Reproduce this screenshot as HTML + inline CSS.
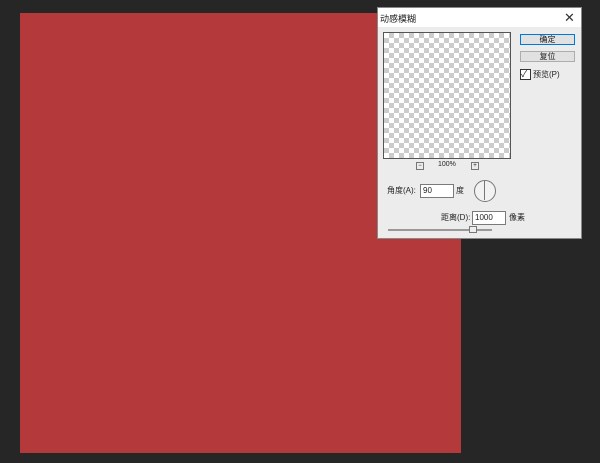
<!DOCTYPE html><html><head><meta charset="utf-8"><style>
body{margin:0;width:600px;height:463px;background:#262626;position:relative;overflow:hidden;font-family:"Liberation Sans","Noto Sans CJK SC",sans-serif;font-size:8px;color:#222}
.a{position:absolute}
.red{left:20px;top:13px;width:441px;height:440px;background:#b3393b}
.dlg{left:377px;top:7px;width:205px;height:232px;background:#ececec;border:1px solid #888;box-sizing:border-box}
.tb{left:0;top:0;width:203px;height:19px;background:#fff}
.chk{left:5px;top:24px;width:126px;height:125px;border:1px solid #555;background-color:#fff;background-image:linear-gradient(45deg,#ccc 25%,transparent 25%,transparent 75%,#ccc 75%),linear-gradient(45deg,#ccc 25%,transparent 25%,transparent 75%,#ccc 75%);background-size:10px 10px;background-position:0 0,5px 5px}
.btn{left:142px;width:55px;height:11px;background:#e1e1e1;border:1px solid #adadad;box-sizing:border-box;text-align:center;line-height:9px;font-size:8px}
.in{background:#fff;border:1px solid #7a7a7a;box-sizing:border-box;height:14px;line-height:12px;padding-left:2px;font-size:8px}
</style></head><body>
<div class="a red"></div>
<div class="a dlg">
<div class="a tb"></div>
<div class="a" style="left:2px;top:4px;font-size:9px">动感模糊</div>
<div class="a" style="left:186px;top:2px;font-size:13px;color:#333">✕</div>
<div class="a chk"></div>
<div class="a btn" style="top:26px;border:1px solid #0078d7">确定</div>
<div class="a btn" style="top:43px">复位</div>
<div class="a" style="left:142px;top:61px;width:9px;height:9px;border:1px solid #333;background:#fff;font-size:9px;line-height:9px">✓</div>
<div class="a" style="left:155px;top:61px">预览(P)</div>
<div class="a" style="left:38px;top:154px;width:6px;height:6px;border:1px solid #777;font-size:6px;line-height:6px;text-align:center">−</div>
<div class="a" style="left:60px;top:153px;font-size:7px">100%</div>
<div class="a" style="left:93px;top:154px;width:6px;height:6px;border:1px solid #777;font-size:6px;line-height:6px;text-align:center">+</div>
<div class="a" style="left:9px;top:177px">角度(A):</div>
<div class="a in" style="left:42px;top:176px;width:34px">90</div>
<div class="a" style="left:78px;top:177px">度</div>
<div class="a" style="left:96px;top:172px;width:20px;height:20px;border:1px solid #777;border-radius:50%;background:#f2f2f2"></div>
<div class="a" style="left:106px;top:173px;width:1px;height:19px;background:#777"></div>
<div class="a" style="left:63px;top:204px">距离(D):</div>
<div class="a in" style="left:94px;top:203px;width:34px">1000</div>
<div class="a" style="left:131px;top:204px">像素</div>
<div class="a" style="left:10px;top:221px;width:104px;height:2px;background:#999"></div>
<div class="a" style="left:91px;top:218px;width:6px;height:5px;background:#eee;border:1px solid #777"></div>
</div>
</body></html>
